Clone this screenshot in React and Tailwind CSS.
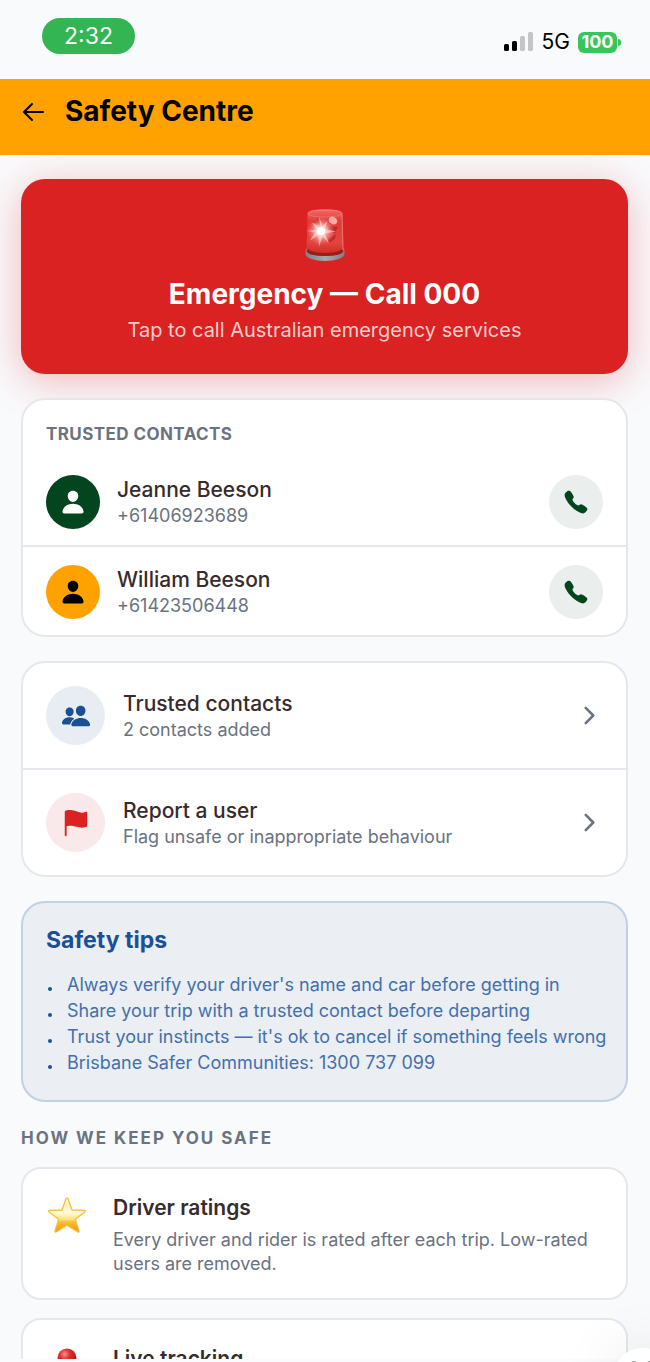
import { IoCall, IoChevronForward, IoFlag, IoPeople, IoPerson } from 'react-icons/io5';

const CONTACTS = [
  { name: 'Jeanne Beeson', phone: '+61406923689', avatar: 'bg-[#03451f] text-white' },
  { name: 'William Beeson', phone: '+61423506448', avatar: 'bg-[#ffa200] text-black' }
];

const ACTIONS = [
  { title: 'Trusted contacts', subtitle: '2 contacts added', icon: IoPeople, color: 'bg-[#e8edf4] text-[#1b5096]' },
  { title: 'Report a user', subtitle: 'Flag unsafe or inappropriate behaviour', icon: IoFlag, color: 'bg-[#fae9ea] text-[#da2222]' }
];

const TIPS = [
  "Always verify your driver's name and car before getting in",
  'Share your trip with a trusted contact before departing',
  "Trust your instincts — it's ok to cancel if something feels wrong",
  'Brisbane Safer Communities: 1300 737 099'
];

const BackIcon = () => (
  <svg viewBox="0 0 27 27" className="size-[27px]" fill="none" stroke="currentColor" strokeWidth="2" strokeLinecap="round" strokeLinejoin="round" aria-hidden="true">
    <path d="M12 6L4 14l8 8M4.500 14H23" />
  </svg>
);

const SirenIcon = () => (
  <svg viewBox="0 0 40 52" className="h-[52px] w-10" aria-hidden="true">
    <defs>
      <linearGradient id="sirenGlass" x1="0" y1="0" x2="0" y2="1">
        <stop offset="0" stopColor="#ef6a66" />
        <stop offset="0.25" stopColor="#e23a38" />
        <stop offset="0.7" stopColor="#e5453f" />
        <stop offset="1" stopColor="#c42a22" />
      </linearGradient>
      <linearGradient id="sirenBase" x1="0" y1="0" x2="1" y2="0">
        <stop offset="0" stopColor="#76848c" />
        <stop offset="0.5" stopColor="#a3a9ad" />
        <stop offset="1" stopColor="#76848c" />
      </linearGradient>
      <radialGradient id="sirenGlow">
        <stop offset="0" stopColor="#fff" />
        <stop offset="0.35" stopColor="#ffd9d5" stopOpacity="0.8" />
        <stop offset="1" stopColor="#ff8a80" stopOpacity="0" />
      </radialGradient>
    </defs>
    <path d="M0.500 42c0-2 1-3 2-3h35c1 0 2 1 2 3v3c0 4-9 7-19.500 7S0.500 49 0.500 45z" fill="url(#sirenBase)" />
    <path d="M2.500 5C2.500 2 9 0.500 20 0.500S37.500 2 37.500 5l1 37c0 3-8 5-18.500 5S1.500 45 1.500 42z" fill="url(#sirenGlass)" />
    <path d="M3 40c4 3 10 4 17 4s13-1 17-4l1 2c0 3-8 5-18 5S2 45 2 42z" fill="#9d1d16" />
    <path d="M3 5c2 2 8 3 17 3s15-1 17-3" fill="none" stroke="#f48b87" strokeOpacity="0.5" />
    <path d="M3 5C3 2 9 1 20 1s17 1 17 4l1 36" fill="none" stroke="#f38a86" strokeOpacity="0.7" />
    <path d="M6 14l7-5 3 6zM24 17l9 1-3 6-7-2zM23 30l8-5-1 5-6 4z" fill="#a81c1a" fillOpacity="0.6" />
    <ellipse cx="28" cy="11.500" rx="4.500" ry="3.500" transform="rotate(35 28 11.500)" fill="#f8aaa6" />
    <circle cx="16" cy="22" r="14" fill="url(#sirenGlow)" />
    <path d="M16 22L14 8l3.500 9 5-5-2.500 8 11 2.500-11 2 4 10-6.500-7-3.500 10-1-11-8 5 5-8-8-1.500 9-1.500-4-7 7 4z" fill="#ffe9e7" fillOpacity="0.55" />
    <circle cx="16" cy="22" r="4" fill="#fff" />
  </svg>
);

const StarIcon = () => (
  <svg viewBox="0 0 38 36" className="h-9 w-[38px]" aria-hidden="true">
    <defs>
      <linearGradient id="starFill" x1="0" y1="0" x2="0" y2="1">
        <stop offset="0" stopColor="#fff3c4" />
        <stop offset="0.45" stopColor="#fff8d8" />
        <stop offset="0.64" stopColor="#ffe06f" />
        <stop offset="0.68" stopColor="#fbc23c" />
        <stop offset="1" stopColor="#ef9208" />
      </linearGradient>
    </defs>
    <path
      d="M19 1.200c.6 0 1 .4 1.200 1L24 13l12.200.4c1.200 0 1.500 1 .6 1.700L27.300 22.300l3.700 11.400c.4 1.200-.5 1.800-1.500 1.100L19 28.200 8.500 34.800c-1 .7-1.900.1-1.500-1.100l3.700-11.400L1.200 15.100c-.9-.7-.6-1.700.6-1.700L14 13l3.800-10.800c.2-.6.6-1 1.200-1z"
      fill="url(#starFill)"
      stroke="#f9be3a"
      strokeWidth="1.300"
      strokeLinejoin="round"
    />
  </svg>
);

const PinIcon = () => (
  <svg viewBox="0 0 38 44" className="h-11 w-[38px]" aria-hidden="true">
    <defs>
      <radialGradient id="pinHead" cx="0.38" cy="0.3" r="0.7">
        <stop offset="0" stopColor="#f9918b" />
        <stop offset="0.4" stopColor="#dc3029" />
        <stop offset="1" stopColor="#b3120f" />
      </radialGradient>
    </defs>
    <path d="M17.500 18h3L19.500 43h-1z" fill="#9aa1a8" />
    <circle cx="19" cy="10" r="9.500" fill="url(#pinHead)" />
  </svg>
);

const StatusBar = () => (
  <div className="flex h-[79px] shrink-0 items-start justify-between pt-[18px] pr-[29px] pl-[42px]">
    <div className="flex h-9 w-[93px] items-center justify-center rounded-full bg-[#34b553] text-[23px] leading-9 text-white">
      2:32
    </div>
    <div className="flex h-12 items-center gap-2">
      <svg viewBox="0 0 30 20" className="h-5 w-[30px]" aria-hidden="true">
        <rect x="0" y="12" width="5" height="7" rx="1.500" fill="#000" />
        <rect x="8" y="9" width="5" height="10" rx="1.500" fill="#000" />
        <rect x="16" y="4" width="5" height="15" rx="1.500" fill="#c3c5c7" />
        <rect x="24" y="0" width="5" height="19" rx="1.500" fill="#c3c5c7" />
      </svg>
      <span className="text-[21px] text-black">5G</span>
      <div className="flex items-center gap-px">
        <span className="flex h-[21px] w-[39px] items-center justify-center rounded-md bg-[#35c759] text-lg font-bold text-white">
          100
        </span>
        <span className="h-[7px] w-[3px] rounded-r-full bg-[#35c759]" />
      </div>
    </div>
  </div>
);

const Card = ({ children }) => (
  <section className="overflow-hidden rounded-[24px] border-2 border-[#e5e7ec] bg-white">{children}</section>
);

const FeatureCard = ({ icon, title, text }) => (
  <article className="flex shrink-0 gap-[17px] rounded-[20px] border-2 border-[#e5e7ec] bg-white px-[23px] pt-[25px] pb-[22px]">
    <div className="flex w-[50px] shrink-0 justify-start pt-[3px] pl-[2px]">{icon}</div>
    <div>
      <h3 className="text-[21px] leading-7 font-semibold text-[#372b2b]">{title}</h3>
      <p className="mt-[6px] text-lg leading-6 text-[#6b7280]">{text}</p>
    </div>
  </article>
);

export default function App() {
  return (
    <div className="relative flex h-screen flex-col overflow-hidden bg-[#f9fafc] font-['Inter',sans-serif]">
      <StatusBar />

      {/* Header */}
      <header className="z-10 flex shrink-0 items-center gap-[18px] bg-[#ffa200] px-5 pt-3 pb-6 text-black">
        <button type="button" aria-label="Back">
          <BackIcon />
        </button>
        <h1 className="text-[28px] leading-10 font-bold">Safety Centre</h1>
      </header>

      <main className="flex flex-col gap-6 pt-6 pr-[22px] pl-[21px]">
        {/* Emergency call */}
        <button
          type="button"
          className="flex w-full flex-col items-center rounded-[24px] bg-[#da2222] px-6 pt-[30px] pb-[30px] text-white shadow-[0_7px_40px_rgba(218,34,34,0.3)]"
        >
          <SirenIcon />
          <span className="mt-[15px] text-[28px] leading-9 font-bold">Emergency — Call 000</span>
          <span className="mt-1 text-xl leading-7 text-[#f9cccc]">Tap to call Australian emergency services</span>
        </button>

        {/* Trusted contacts */}
        <Card>
          <h2 className="px-[23px] pt-[22px] pb-[11px] text-[17px] leading-6 font-bold tracking-wide text-[#6b7280]">
            TRUSTED CONTACTS
          </h2>
          <ul className="divide-y-2 divide-[#e5e7ec]">
            {CONTACTS.map((contact) => (
              <li key={contact.phone} className="flex items-center gap-[17px] px-[23px] pt-[18px] pb-4">
                <span className={`flex size-[54px] items-center justify-center rounded-full ${contact.avatar}`}>
                  <IoPerson size={26} />
                </span>
                <div className="flex-1">
                  <p className="text-[21px] leading-7 font-medium text-[#372b2b]">{contact.name}</p>
                  <p className="text-lg leading-6 text-[#6b7280]">{contact.phone}</p>
                </div>
                <button
                  type="button"
                  aria-label={`Call ${contact.name}`}
                  className="flex size-[54px] items-center justify-center rounded-full bg-[#eaeeed] text-[#03451f]"
                >
                  <IoCall size={26} />
                </button>
              </li>
            ))}
          </ul>
        </Card>

        {/* Actions */}
        <Card>
          <div className="divide-y-2 divide-[#e5e7ec]">
            {ACTIONS.map(({ title, subtitle, icon: Icon, color }) => (
              <button key={title} type="button" className="flex w-full items-center gap-[18px] px-[23px] py-[23px] text-left">
                <span className={`flex size-[59px] items-center justify-center rounded-full ${color}`}>
                  <Icon size={30} />
                </span>
                <span className="flex-1">
                  <span className="block text-[21px] leading-7 font-medium text-[#372b2b]">{title}</span>
                  <span className="block text-lg leading-6 text-[#6b7280]">{subtitle}</span>
                </span>
                <IoChevronForward size={27} className="text-[#6b7280]" />
              </button>
            ))}
          </div>
        </Card>

        {/* Safety tips */}
        <section className="rounded-[24px] border-2 border-[#c1d0e3] bg-[#ebeef3] pt-[21px] pb-6 pl-[23px]">
          <h2 className="text-[23px] leading-8 font-bold text-[#1b5096]">Safety tips</h2>
          <ul className="mt-4">
            {TIPS.map((tip) => (
              <li key={tip} className="flex items-center gap-[15px] text-lg leading-[26px] text-[#4370ab]">
                <span className="mt-2 ml-[2px] size-1 shrink-0 rounded-full bg-[#1b5096]" />
                {tip}
              </li>
            ))}
          </ul>
        </section>

        {/* How we keep you safe */}
        <section>
          <h2 className="text-[17px] leading-6 font-bold tracking-[2px] text-[#6b7280]">HOW WE KEEP YOU SAFE</h2>
          <div className="mt-[17px] flex flex-col gap-[18px]">
            <FeatureCard
              icon={<StarIcon />}
              title="Driver ratings"
              text="Every driver and rider is rated after each trip. Low-rated users are removed."
            />
            <FeatureCard icon={<PinIcon />} title="Live tracking" text="" />
          </div>
        </section>
      </main>

      {/* Bottom bar edge and floating menu */}
      <div className="absolute inset-x-0 bottom-0 h-[3px] bg-[#fafbfc]" />
      <button
        type="button"
        aria-label="More"
        className="absolute -right-5 -bottom-[42px] flex size-14 justify-center gap-[10px] rounded-full bg-white pt-[13px] shadow-[0_0_60px_rgba(0,0,0,0.1)]"
      >
        <span className="size-[6px] rounded-full bg-[#9a9a9a]" />
        <span className="size-[6px] rounded-full bg-[#9a9a9a]" />
      </button>
    </div>
  );
}
